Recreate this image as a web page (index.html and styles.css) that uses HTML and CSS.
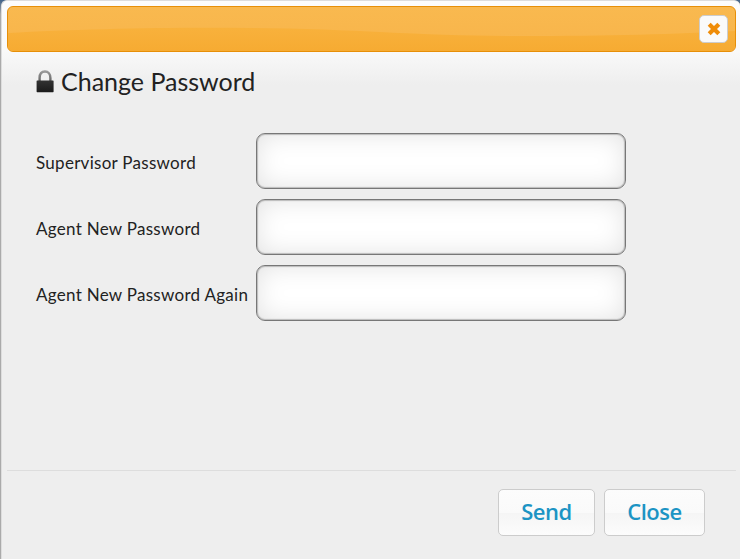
FILE: index.html
```html
<!DOCTYPE html>
<html lang="en">
<head>
  <meta charset="UTF-8">
  <title>Change Password</title>
  <link rel="stylesheet" href="styles.css">
</head>
<body>
  <div class="dialog">
    <div class="titlebar">
      <svg class="wave" viewBox="0 0 727 44" preserveAspectRatio="none">
        <path d="M0 26 C70 22 160 20 245 21 C350 22 410 29 510 29 C600 29 670 27 727 24 V44 H0 Z" fill="url(#gloss)"/>
        <defs>
          <linearGradient id="gloss" x1="0" y1="0" x2="0" y2="1">
            <stop offset="0" stop-color="#f8b13c"/>
            <stop offset="1" stop-color="#f6ab32"/>
          </linearGradient>
        </defs>
      </svg>
      <button class="close-btn" type="button" aria-label="Close">
        <svg width="16" height="16" viewBox="0 0 16 16">
          <path d="M3.2 3.2 L12.8 12.8 M12.8 3.2 L3.2 12.8" stroke="#ef8c08" stroke-width="4.2"/>
        </svg>
      </button>
    </div>

    <form class="content">
      <h1>
        <svg class="lock" width="18" height="23" viewBox="0 0 18 23">
          <defs>
            <linearGradient id="shackle" x1="0" y1="0" x2="0" y2="1">
              <stop offset="0" stop-color="#999"/>
              <stop offset="1" stop-color="#666"/>
            </linearGradient>
            <linearGradient id="lockBody" x1="0" y1="0" x2="0" y2="1">
              <stop offset="0" stop-color="#333"/>
              <stop offset="1" stop-color="#1b1b1b"/>
            </linearGradient>
          </defs>
          <path d="M3.6 11 V8 C3.6 3.8 5.8 1.5 9 1.5 S14.4 3.8 14.4 8 V11" fill="none" stroke="url(#shackle)" stroke-width="2.4"/>
          <rect x="0.6" y="10.5" width="17" height="11.7" rx="0.6" fill="url(#lockBody)"/>
        </svg>
        <span>Change Password</span>
      </h1>
      <div class="row">
        <label for="supervisor">Supervisor Password</label>
        <input type="password" id="supervisor">
      </div>
      <div class="row">
        <label for="newPassword">Agent New Password</label>
        <input type="password" id="newPassword">
      </div>
      <div class="row">
        <label for="newPasswordAgain">Agent New Password Again</label>
        <input type="password" id="newPasswordAgain">
      </div>
    </form>

    <div class="buttonpane">
      <button class="btn send" type="button">Send</button>
      <button class="btn close" type="button">Close</button>
    </div>
  </div>
</body>
</html>
```
FILE: styles.css
```css
* {
  box-sizing: border-box;
}

body {
  margin: 0;
  height: 559px;
  overflow: hidden;
  background: linear-gradient(#41638a 0, #aaa 14px);
  font-family: Lato, "Open Sans", sans-serif;
  color: #222;
}

.dialog {
  display: flex;
  flex-direction: column;
  height: 559px;
  margin-left: 1px;
  padding: 5px 4px 0 5px;
  border-top: 1px solid #ddd;
  border-left: 1px solid #ddd;
  border-radius: 6px 6px 0 0;
  background: #eee linear-gradient(#fcfcfc 0, #f9f9f9 50px, #eee 84px);
}

.titlebar {
  position: relative;
  display: flex;
  align-items: center;
  justify-content: flex-end;
  flex: none;
  height: 46px;
  padding-right: 7px;
  overflow: hidden;
  border: 1px solid #e78f08;
  border-radius: 6px;
  background: linear-gradient(#f9b94f, #f7b44a);
}

/* glossy wave behind the close button */
.wave {
  position: absolute;
  left: 0;
  top: 0;
  width: 100%;
  height: 100%;
}

.close-btn {
  position: relative;
  display: flex;
  align-items: center;
  justify-content: center;
  width: 29px;
  height: 28px;
  padding: 0;
  border: 1px solid #ccc;
  border-radius: 5px;
  background: #fafafa;
}

.content {
  flex: 1;
  padding: 15px 29px 0;
}

h1 {
  display: flex;
  align-items: center;
  gap: 7px;
  height: 31px;
  margin: 0 0 35px;
  font-size: 25px;
  font-weight: 400;
  white-space: nowrap;
}

h1 span {
  padding-bottom: 4px;
}

.lock {
  margin-top: -3px;
}

.row {
  display: flex;
  align-items: center;
  margin-bottom: 10px;
}

.row label {
  width: 220px;
  padding-top: 3px;
  font-size: 17px;
  letter-spacing: 0.28px;
  white-space: nowrap;
}

.row input {
  width: 370px;
  height: 56px;
  padding: 0 12px;
  border: 1px solid #777;
  border-radius: 9px;
  outline: none;
  background: #fff;
  box-shadow: inset 0 0 1px 1px #bbb, inset 0 0 26px #e2e2e2;
  font-size: 17px;
}

.buttonpane {
  display: flex;
  justify-content: flex-end;
  gap: 9px;
  flex: none;
  height: 89px;
  padding: 18px 31px 0 0;
  border-top: 1px solid #ddd;
}

.btn {
  height: 47px;
  padding: 0 0 4px;
  border: 1px solid #ccc;
  border-radius: 5px;
  background: linear-gradient(#fcfcfc 0, #fafafa 50%, #f5f5f5 51%, #fcfcfc 100%);
  color: #1c94c4;
  font-family: "Open Sans", sans-serif;
  font-size: 22px;
  font-weight: 600;
  letter-spacing: -0.5px;
}

.send {
  width: 97px;
}

.close {
  width: 101px;
}
```
